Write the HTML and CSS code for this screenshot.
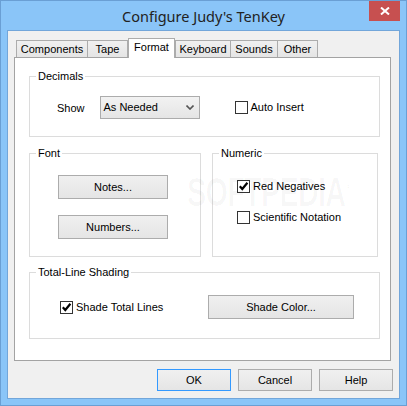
FILE: index.html
```html
<!DOCTYPE html>
<html>
<head>
<meta charset="utf-8">
<link rel="stylesheet" href="styles.css">
</head>
<body>
<div class="window">
  <div class="titlebar">
    <span class="title">Configure Judy's TenKey</span>
    <div class="close">
      <svg width="10" height="8" viewBox="0 0 10 8"><path d="M1 0.5 L9 7.5 M9 0.5 L1 7.5" stroke="#fff" stroke-width="2" fill="none"/></svg>
    </div>
  </div>
  <div class="client">
    <div class="tabs">
      <div class="tab t-components">Components</div>
      <div class="tab t-tape">Tape</div>
      <div class="tab t-format selected">Format</div>
      <div class="tab t-keyboard">Keyboard</div>
      <div class="tab t-sounds">Sounds</div>
      <div class="tab t-other">Other</div>
    </div>
    <div class="panel">
      <div class="watermark">SOFTPEDIA<sup>®</sup></div>
      <div class="group decimals">
        <span class="legend">Decimals</span>
        <div class="row">
          <span class="label">Show</span>
          <div class="select">
            <span>As Needed</span>
            <svg width="8" height="5" viewBox="0 0 8 5"><path d="M0.5 0.5 L4 4 L7.5 0.5" stroke="#555" stroke-width="1.6" fill="none"/></svg>
          </div>
          <div class="check auto"><span class="box"></span><span>Auto Insert</span></div>
        </div>
      </div>
      <div class="mid">
        <div class="group font">
          <span class="legend">Font</span>
          <div class="stack">
            <div class="btn">Notes...</div>
            <div class="btn">Numbers...</div>
          </div>
        </div>
        <div class="group numeric">
          <span class="legend">Numeric</span>
          <div class="checks">
            <div class="check"><span class="box"><svg width="11" height="11" viewBox="0 0 11 11"><path d="M1.8 5.2 L4.3 8 L9.4 1.8" stroke="#000" stroke-width="2.2" fill="none"/></svg></span><span>Red Negatives</span></div>
            <div class="check"><span class="box"></span><span>Scientific Notation</span></div>
          </div>
        </div>
      </div>
      <div class="group shading">
        <span class="legend">Total-Line Shading</span>
        <div class="row spread">
          <div class="check"><span class="box"><svg width="11" height="11" viewBox="0 0 11 11"><path d="M1.8 5.2 L4.3 8 L9.4 1.8" stroke="#000" stroke-width="2.2" fill="none"/></svg></span><span>Shade Total Lines</span></div>
          <div class="btn wide">Shade Color...</div>
        </div>
      </div>
    </div>
    <div class="actions">
      <div class="btn action default">OK</div>
      <div class="btn action">Cancel</div>
      <div class="btn action">Help</div>
    </div>
  </div>
</div>
</body>
</html>
```
FILE: styles.css
```css
* { box-sizing: border-box; }
html, body { margin: 0; padding: 0; background: #8ac5f8; }
body {
  font-family: "Liberation Sans", Arial, sans-serif;
  font-size: 11px;
  color: #000;
}
.window {
  width: 407px;
  height: 406px;
  background: #8ac5f8;
  border: 1px solid #6a9fd4;
  display: flex;
  flex-direction: column;
}
.titlebar {
  height: 29px;
  display: grid;
  grid-template-columns: 1fr auto 1fr;
  align-items: start;
}
.title {
  grid-column: 2;
  font-family: "Noto Sans", "Open Sans", sans-serif;
  font-size: 14.5px;
  color: #222;
  line-height: 20px;
  padding-top: 5px;
  white-space: nowrap;
}
.close {
  grid-column: 3;
  justify-self: end;
  margin-right: 6px;
  width: 31px;
  height: 20px;
  background: #c75050;
  display: flex;
  align-items: center;
  justify-content: center;
}
.close svg { display: block; }
.client {
  margin: 0 6px;
  height: 369px;
  background: #f0f0f0;
  border: 1px solid #72a6da;
  padding: 7px 8px 7px 6px;
  display: flex;
  flex-direction: column;
}
.tabs {
  display: flex;
  align-items: flex-end;
  height: 19px;
  padding-left: 2px;
}
.tab {
  height: 17px;
  border: 1px solid #acacac;
  border-bottom: none;
  background: linear-gradient(#f0f0f0, #e5e5e5);
  margin-left: -1px;
  text-align: center;
  line-height: 15px;
  padding-top: 1px;
  white-space: nowrap;
}
.t-components { width: 72px; margin-left: 0; }
.t-tape { width: 41px; }
.t-format { width: 47px; }
.t-keyboard { width: 56px; }
.t-sounds { width: 48px; }
.t-other { width: 41px; }
.tab.selected {
  height: 20px;
  margin-left: 0;
  margin-bottom: -1px;
  background: #fff;
  position: relative;
  z-index: 1;
  padding-top: 1px;
}
.tab.selected + .tab { margin-left: 0; }
.panel {
  position: relative;
  height: 304px;
  background: #fff;
  border: 1px solid #a3a3a3;
  padding: 12px 10px 0 14px;
  display: flex;
  flex-direction: column;
}
.watermark {
  position: absolute;
  left: 172px;
  top: 112px;
  font-family: "Liberation Sans", sans-serif;
  font-weight: bold;
  font-size: 40px;
  letter-spacing: -1px;
  color: rgba(0, 0, 0, 0.03);
  transform: scaleX(0.72);
  transform-origin: left top;
  pointer-events: none;
  white-space: nowrap;
}
.watermark sup { font-size: 12px; }
.group {
  border: 1px solid #dcdcdc;
  margin-top: 6px;
}
.legend {
  display: block;
  width: max-content;
  margin: -7px 0 0 6px;
  padding: 0 2px;
  background: #fff;
  height: 13px;
  line-height: 13px;
  position: relative;
}
.row {
  display: flex;
  align-items: center;
  height: 23px;
}
.decimals {
  padding: 0 0 17px 0;
}
.decimals .row { margin-top: 13px; padding-left: 27px; }
.select {
  margin-left: 15px;
  width: 100px;
  height: 23px;
  border: 1px solid #acacac;
  background: linear-gradient(#f2f2f2, #e5e5e5);
  display: flex;
  align-items: center;
  justify-content: space-between;
  padding: 0 3px 1px 3px;
}
.select svg { display: block; margin-right: 2px; }
.check {
  display: flex;
  align-items: center;
  height: 13px;
  line-height: 13px;
  white-space: nowrap;
}
.check .box {
  width: 13px;
  height: 13px;
  border: 1px solid #333;
  background: #fff;
  margin-right: 3px;
  flex: none;
  display: flex;
  align-items: center;
  justify-content: center;
}
.check .box svg { display: block; }
.auto { margin-left: 35px; }
.mid {
  display: flex;
  gap: 11px;
  margin-top: 10px;
}
.font {
  width: 172px;
  height: 104px;
}
.stack {
  display: flex;
  flex-direction: column;
  gap: 16px;
  margin-top: 15px;
  padding-left: 28px;
}
.btn {
  height: 24px;
  width: 110px;
  border: 1px solid #acacac;
  background: linear-gradient(#f0f0f0, #e5e5e5);
  display: flex;
  align-items: center;
  justify-content: center;
  white-space: nowrap;
}
.numeric {
  width: 166px;
  height: 104px;
}
.checks {
  display: flex;
  flex-direction: column;
  gap: 18px;
  margin-top: 20px;
  padding-left: 24px;
}
.shading {
  margin-top: 15px;
  height: 67px;
}
.spread {
  justify-content: space-between;
  height: 24px;
  margin-top: 16px;
  padding: 0 25px 0 30px;
}
.btn.wide { width: 146px; }
.actions {
  display: flex;
  justify-content: flex-end;
  gap: 7px;
  margin-top: 8px;
  margin-right: -2px;
}
.btn.action {
  width: 74px;
  height: 22px;
}
.btn.default { border-color: #3399ff; }
```
